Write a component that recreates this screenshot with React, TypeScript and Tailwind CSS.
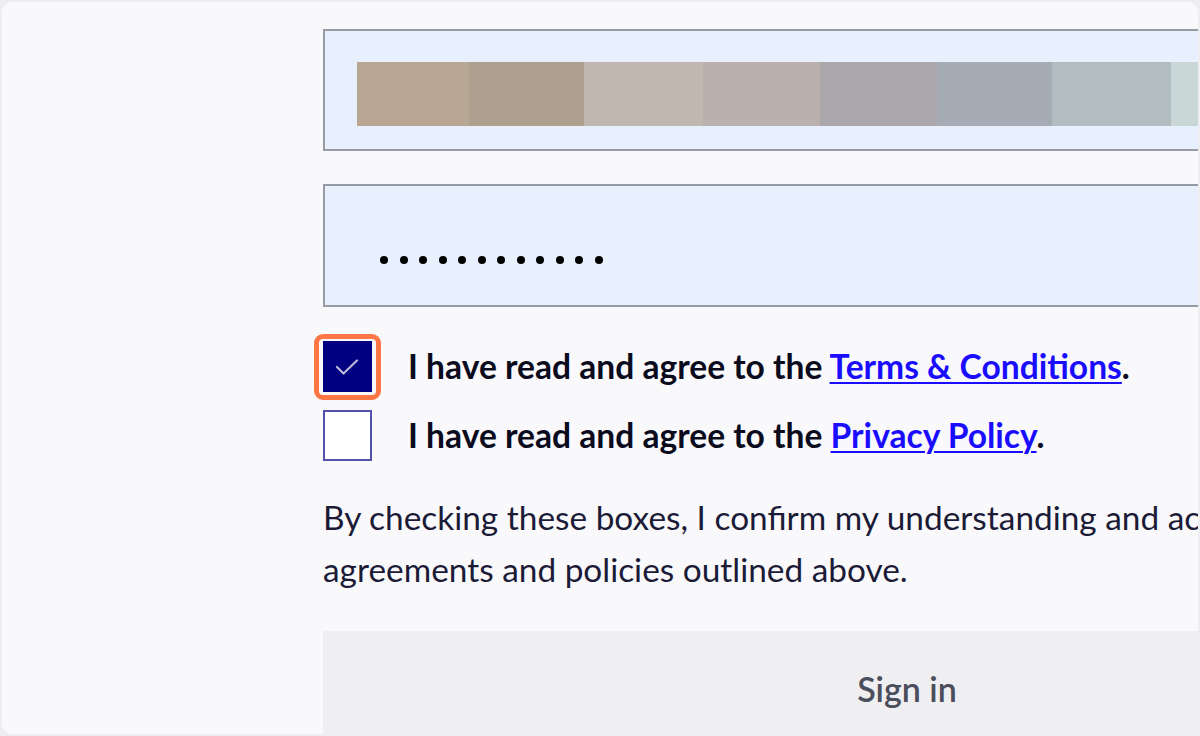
import React from 'react';

const swatches = [
  { c: '#b8a792', w: 112 },
  { c: '#ada08f', w: 115 },
  { c: '#c0b7b0', w: 119 },
  { c: '#bab0ae', w: 117 },
  { c: '#aba7ab', w: 117 },
  { c: '#a6acb6', w: 115 },
  { c: '#b2bcc1', w: 119 },
  { c: '#c9d8d6', w: 117 },
];

export default function App() {
  return (
    <div className="w-[1200px] h-[736px] bg-[#eeeef1] p-[2px] font-['Lato',sans-serif]">
      <div className="h-full rounded-[10px] bg-[#f9f9fb] overflow-hidden pl-[321px] pt-[27px]">
        <div className="w-[1168px] flex flex-col">
          {/* Username field (blurred) */}
          <div className="h-[122px] border-2 border-[#979ba6] bg-[#e8f0fe] pl-[32px] pt-[31px]">
            <div className="flex h-[64px]">
              {swatches.map((s, i) => (
                <div key={i} className="h-full shrink-0" style={{ backgroundColor: s.c, width: s.w }} />
              ))}
            </div>
          </div>

          {/* Password field */}
          <div className="mt-[33px] h-[123px] border-2 border-[#979ba6] bg-[#e8f0fe] flex items-center pl-[55px] pt-[29px]">
            <div className="flex gap-[11.5px]">
              {Array.from({ length: 12 }).map((_, i) => (
                <span key={i} className="w-[8px] h-[8px] rounded-full bg-black" />
              ))}
            </div>
          </div>

          {/* Checkboxes */}
          <div className="mt-[34px] flex items-center">
            <div className="relative w-[49px] h-[51px] shrink-0">
              <div className="absolute -left-[9px] -right-[9px] -top-[7px] -bottom-[8px] border-[5px] border-[#fe7645] rounded-[9px]" />
              <div className="w-full h-full bg-[#000080] flex items-center justify-center">
                <svg width="49" height="51" viewBox="0 0 49 51">
                  <path d="M14 26 L20.5 32.5 L34 19.5" fill="none" stroke="#b9b8d9" strokeWidth="2.2" strokeLinecap="round" strokeLinejoin="round" />
                </svg>
              </div>
            </div>
            <p className="ml-[36px] text-[33.6px] font-bold text-[#0b0b1e] leading-none whitespace-nowrap">
              I have read and agree to the{' '}
              <a href="#" className="text-[#1a0dff] underline underline-offset-[3px] decoration-[2px]">Terms &amp; Conditions</a>.
            </p>
          </div>

          <div className="mt-[18px] flex items-center">
            <div className="w-[49px] h-[51px] shrink-0 border-2 border-[#5252ad] bg-white" />
            <p className="ml-[36px] text-[33.6px] font-bold text-[#0b0b1e] leading-none whitespace-nowrap">
              I have read and agree to the{' '}
              <a href="#" className="text-[#1a0dff] underline underline-offset-[3px] decoration-[2px]">Privacy Policy</a>.
            </p>
          </div>

          {/* Disclaimer */}
          <p className="mt-[30px] w-[1380px] text-[33.4px] leading-[52px] text-[#1b1b38]">
            By checking these boxes, I confirm my understanding and acceptance of the terms of these agreements and policies outlined above.
          </p>

          {/* Submit */}
          <button className="mt-[36px] h-[114px] w-full bg-[#efeff1] text-[34px] font-semibold text-[#4b4e5c]">
            Sign in
          </button>
        </div>
      </div>
    </div>
  );
}
